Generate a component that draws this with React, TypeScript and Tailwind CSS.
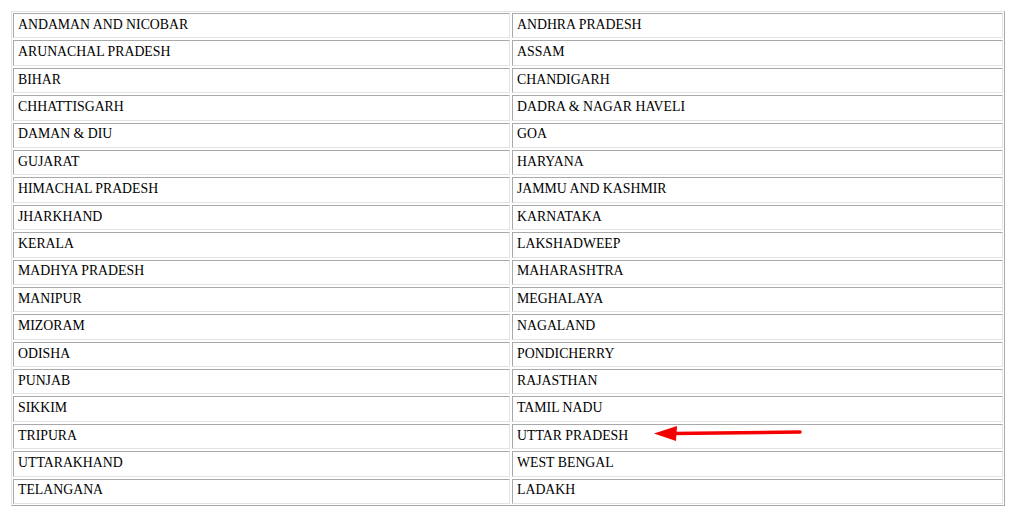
import React from "react";

const rows: [string, string][] = [
  ["ANDAMAN AND NICOBAR", "ANDHRA PRADESH"],
  ["ARUNACHAL PRADESH", "ASSAM"],
  ["BIHAR", "CHANDIGARH"],
  ["CHHATTISGARH", "DADRA & NAGAR HAVELI"],
  ["DAMAN & DIU", "GOA"],
  ["GUJARAT", "HARYANA"],
  ["HIMACHAL PRADESH", "JAMMU AND KASHMIR"],
  ["JHARKHAND", "KARNATAKA"],
  ["KERALA", "LAKSHADWEEP"],
  ["MADHYA PRADESH", "MAHARASHTRA"],
  ["MANIPUR", "MEGHALAYA"],
  ["MIZORAM", "NAGALAND"],
  ["ODISHA", "PONDICHERRY"],
  ["PUNJAB", "RAJASTHAN"],
  ["SIKKIM", "TAMIL NADU"],
  ["TRIPURA", "UTTAR PRADESH"],
  ["UTTARAKHAND", "WEST BENGAL"],
  ["TELANGANA", "LADAKH"],
];

function Cell({ text, arrow }: { text: string; arrow?: boolean }) {
  return (
    <div className="relative h-[25.4px] flex items-center pl-[4px] pb-[1px] border border-t-[#a9a9a9] border-l-[#a9a9a9] border-b-[#e3e3e3] border-r-[#e3e3e3]">
      <span>{text}</span>
      {arrow && (
        <svg
          className="absolute left-[139px] top-[-1px]"
          width="152"
          height="20"
          viewBox="0 0 152 20"
        >
          <line x1="20" y1="9.5" x2="148" y2="8" stroke="#f40000" strokeWidth="3.5" strokeLinecap="round" />
          <polygon points="2,9.5 25,2 24,17" fill="#f40000" />
        </svg>
      )}
    </div>
  );
}

export default function App() {
  return (
    <div className="w-[1024px] h-[515px] bg-white pt-[11px] pl-[11px] text-black text-[13.8px]" style={{ fontFamily: '"Liberation Serif", "Times New Roman", serif' }}>
      <div className="w-[994px] grid grid-cols-[497fr_491fr] gap-[2px] p-[1px] border border-t-[#e3e3e3] border-l-[#e3e3e3] border-b-[#a9a9a9] border-r-[#a9a9a9]">
        {rows.map(([a, b]) => (
          <React.Fragment key={a}>
            <Cell text={a} />
            <Cell text={b} arrow={b === "UTTAR PRADESH"} />
          </React.Fragment>
        ))}
      </div>
    </div>
  );
}
